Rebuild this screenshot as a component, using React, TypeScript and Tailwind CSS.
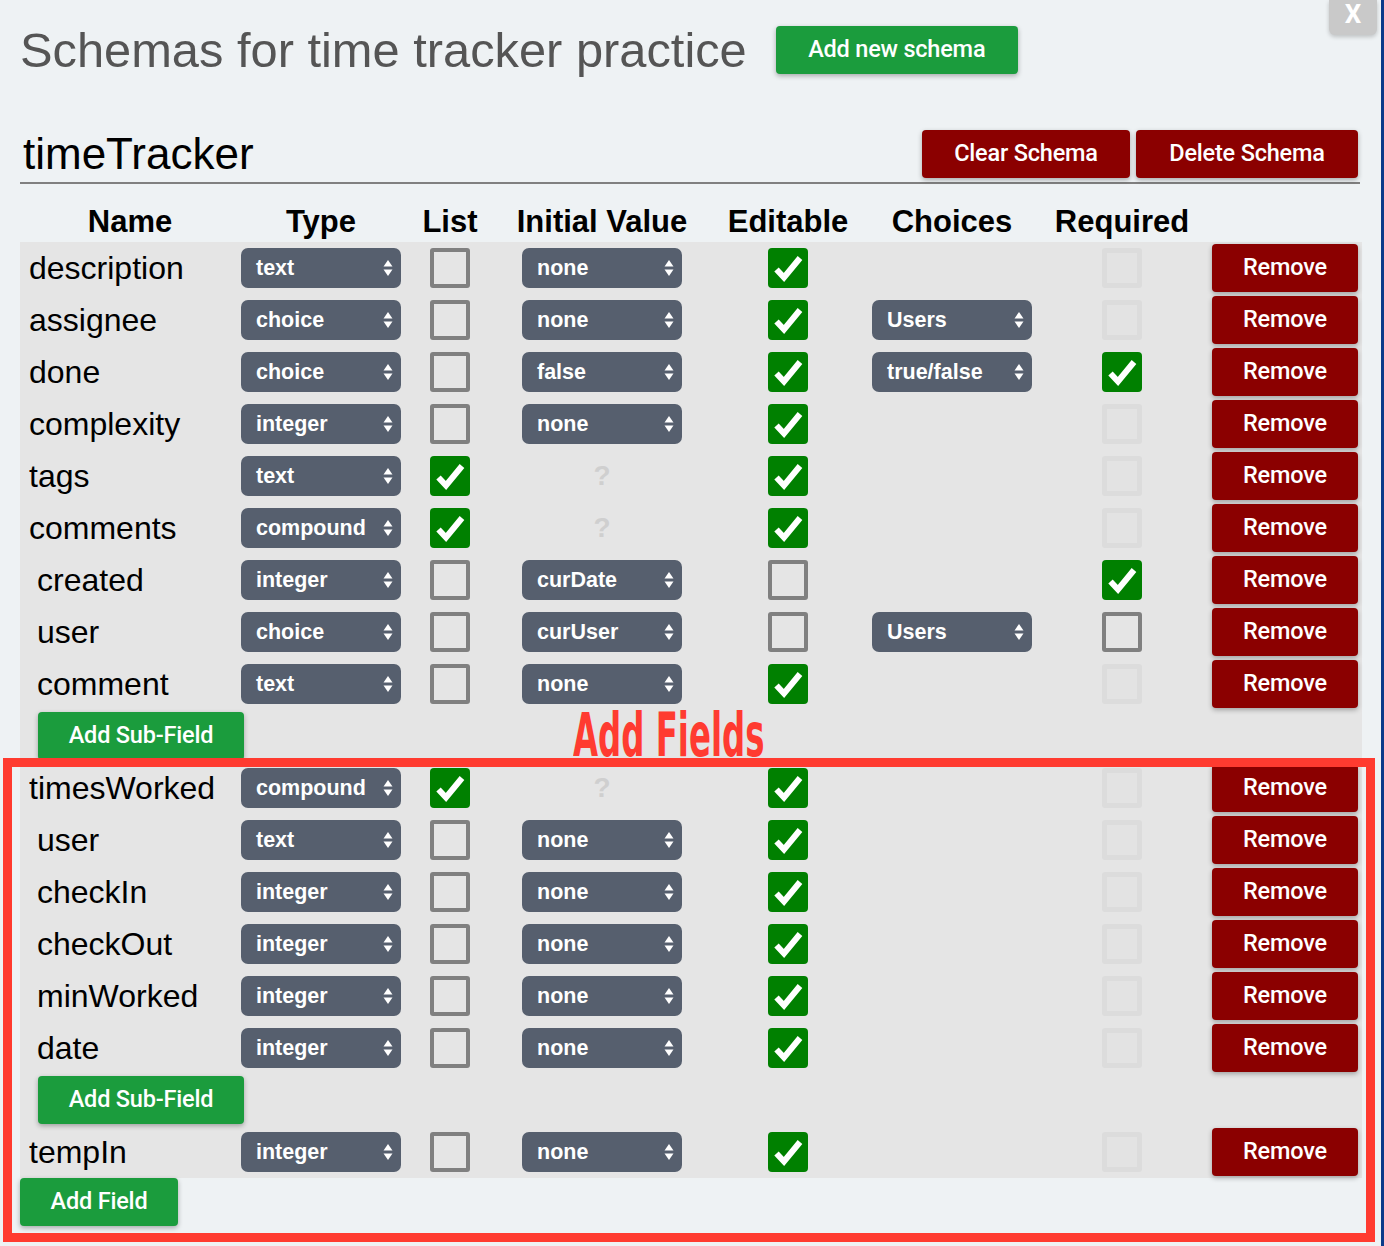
import React from "react";

type Box = "on" | "off" | "disabled";

type Field = {
    kind: "field";
    name: string;
    sub?: boolean;
    type: string;
    list: Box;
    init: string | null;
    edit: Box;
    choices?: string;
    req: Box;
};

type Row = Field | { kind: "addSub" };

const rows: Row[] = [
    { kind: "field", name: "description", type: "text", list: "off", init: "none", edit: "on", req: "disabled" },
    { kind: "field", name: "assignee", type: "choice", list: "off", init: "none", edit: "on", choices: "Users", req: "disabled" },
    { kind: "field", name: "done", type: "choice", list: "off", init: "false", edit: "on", choices: "true/false", req: "on" },
    { kind: "field", name: "complexity", type: "integer", list: "off", init: "none", edit: "on", req: "disabled" },
    { kind: "field", name: "tags", type: "text", list: "on", init: null, edit: "on", req: "disabled" },
    { kind: "field", name: "comments", type: "compound", list: "on", init: null, edit: "on", req: "disabled" },
    { kind: "field", name: "created", sub: true, type: "integer", list: "off", init: "curDate", edit: "off", req: "on" },
    { kind: "field", name: "user", sub: true, type: "choice", list: "off", init: "curUser", edit: "off", choices: "Users", req: "off" },
    { kind: "field", name: "comment", sub: true, type: "text", list: "off", init: "none", edit: "on", req: "disabled" },
    { kind: "addSub" },
    { kind: "field", name: "timesWorked", type: "compound", list: "on", init: null, edit: "on", req: "disabled" },
    { kind: "field", name: "user", sub: true, type: "text", list: "off", init: "none", edit: "on", req: "disabled" },
    { kind: "field", name: "checkIn", sub: true, type: "integer", list: "off", init: "none", edit: "on", req: "disabled" },
    { kind: "field", name: "checkOut", sub: true, type: "integer", list: "off", init: "none", edit: "on", req: "disabled" },
    { kind: "field", name: "minWorked", sub: true, type: "integer", list: "off", init: "none", edit: "on", req: "disabled" },
    { kind: "field", name: "date", sub: true, type: "integer", list: "off", init: "none", edit: "on", req: "disabled" },
    { kind: "addSub" },
    { kind: "field", name: "tempIn", type: "integer", list: "off", init: "none", edit: "on", req: "disabled" },
];

const cols = "grid grid-cols-[220px_162px_96px_208px_164px_164px_176px_152px]";
const btn = "h-[48px] rounded-[4px] text-white text-[23.5px] font-medium tracking-[-0.2px] font-['Roboto',sans-serif] shadow-[0_2px_5px_rgba(0,0,0,0.3)] flex items-center justify-center";

function Check({ state }: { state: Box }) {
    if (state === "on") {
        return (
            <div className="w-[40px] h-[40px] rounded-[4px] bg-[#008000] flex items-center justify-center">
                <svg width="40" height="40" viewBox="0 0 40 40">
                    <path d="M8.5 21.5 L16 29.5 L32 10" stroke="#fff" strokeWidth="6" fill="none" />
                </svg>
            </div>
        );
    }
    if (state === "off") {
        return <div className="w-[40px] h-[40px] rounded-[3px] border-[4px] border-[#808080]" />;
    }
    return <div className="w-[40px] h-[40px] rounded-[3px] border-[5px] border-[#dcdcdc] bg-[#e3e3e3]" />;
}

function Select({ value }: { value: string }) {
    return (
        <div className="w-[160px] h-[40px] rounded-[7px] bg-[#565f6e] flex items-center justify-between pl-[15px] pr-[7px] text-white text-[21.5px] font-bold">
            <span>{value}</span>
            <svg width="12" height="18" viewBox="0 0 12 18">
                <path d="M6 1 L10.5 7.5 L1.5 7.5 Z" fill="#fff" />
                <path d="M6 17 L10.5 10.5 L1.5 10.5 Z" fill="#fff" />
            </svg>
        </div>
    );
}

function FieldRow({ f }: { f: Field }) {
    return (
        <div className={`${cols} h-[52px] items-center`}>
            <div className={`${f.sub ? "pl-[17px]" : "pl-[9px]"} text-[32px] text-black`}>{f.name}</div>
            <div className="flex justify-center"><Select value={f.type} /></div>
            <div className="flex justify-center"><Check state={f.list} /></div>
            <div className="flex justify-center">
                {f.init ? <Select value={f.init} /> : <span className="text-[28px] font-bold text-[#cfcfcf]">?</span>}
            </div>
            <div className="flex justify-center"><Check state={f.edit} /></div>
            <div className="flex justify-center">{f.choices && <Select value={f.choices} />}</div>
            <div className="flex justify-center"><Check state={f.req} /></div>
            <div className="pl-[2px]">
                <button className={`${btn} w-[146px] bg-[#8b0000]`}>Remove</button>
            </div>
        </div>
    );
}

export default function App() {
    return (
        <div className="w-[1384px] h-[1246px] bg-[#eef2f4] flex relative overflow-hidden font-['Liberation_Sans',Arial,sans-serif]">
            <div className="flex-1 flex flex-col">
                <div className="flex items-center pt-[26px] pl-[20px] gap-[29px]">
                    <h1 className="text-[48.8px] leading-[48px] text-[#555555]">Schemas for time tracker practice</h1>
                    <button className={`${btn} w-[242px] bg-[#1b9c3d]`}>Add new schema</button>
                </div>

                <div className="mt-[56px] ml-[20px] w-[1340px] flex items-center justify-between border-b-2 border-[#808080] pb-[4px] pr-[2px]">
                    <h2 className="pl-[3px] text-[44px] leading-[48px] text-black">timeTracker</h2>
                    <div className="flex gap-[6px]">
                        <button className={`${btn} w-[208px] bg-[#8b0000]`}>Clear Schema</button>
                        <button className={`${btn} w-[222px] bg-[#8b0000]`}>Delete Schema</button>
                    </div>
                </div>

                <div className={`${cols} ml-[20px] h-[58px] items-end pb-[2px] text-[31px] font-bold text-black text-center leading-[36px]`}>
                    <div>Name</div>
                    <div>Type</div>
                    <div>List</div>
                    <div>Initial Value</div>
                    <div>Editable</div>
                    <div>Choices</div>
                    <div>Required</div>
                    <div />
                </div>

                <div className="ml-[20px] w-[1342px] bg-[#e5e5e5]">
                    {rows.map((r, i) =>
                        r.kind === "addSub" ? (
                            <div key={i} className="h-[52px] flex items-center pl-[18px]">
                                <button className={`${btn} w-[206px] h-[46px] bg-[#1b9c3d]`}>Add Sub-Field</button>
                            </div>
                        ) : (
                            <FieldRow key={i} f={r} />
                        )
                    )}
                </div>

                <div className="ml-[20px]">
                    <button className={`${btn} w-[158px] bg-[#1b9c3d]`}>Add Field</button>
                </div>
            </div>
            <div className="w-[3px] bg-[#0b3a8a]" />

            {/* close button */}
            <div className="absolute top-0 right-[7px] w-[48px] h-[35px] rounded-b-[6px] bg-[#c9c9c9] shadow-[0_2px_4px_rgba(0,0,0,0.2)] flex justify-center text-white text-[26px] font-bold leading-[28px] font-['Roboto',sans-serif]">X</div>

            {/* annotation */}
            <div className="absolute left-[573px] top-[705px] text-[#ff3b30] text-[60px] font-bold leading-[60px] scale-x-60 origin-left font-['DejaVu_Sans_Condensed','DejaVu_Sans',sans-serif]">Add Fields</div>
            <div className="absolute left-[3px] top-[758px] w-[1372px] h-[484px] border-[9px] border-[#ff3b30]" />
        </div>
    );
}
